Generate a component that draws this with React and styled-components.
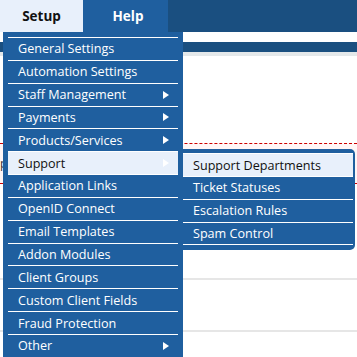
import styled, { createGlobalStyle } from "styled-components"

const Global = createGlobalStyle`
    html, body {
        margin: 0;
        padding: 0;
        background: #fff;
        font-family: "Open Sans", "Liberation Sans", sans-serif;
    }
    * { box-sizing: border-box; }
`;

const Page = styled.div`
    position: relative;
    width: 357px;
    height: 357px;
    overflow: hidden;
    background: #fff;
`;

const TopBar = styled.div`
    display: flex;
    height: 32px;
    background: #1a4f80;
`;

const Tab = styled.div`
    width: ${p => p.$w}px;
    display: flex;
    align-items: center;
    justify-content: center;
    font-size: 13.5px;
    font-weight: 700;
    color: ${p => p.$active ? '#111' : '#fff'};
    background: ${p => p.$active ? '#e8f0fb' : '#1f5f9f'};
    padding-left: ${p => p.$pl || 0}px;
`;

const Band = styled.div`
    margin-top: 10px;
    height: 10px;
    background: #1a4f80;
    border-bottom: 4px solid #e4e8ea;
    box-sizing: content-box;
`;

const Content = styled.div`
    padding-top: 87px;
`;

const NoticeBox = styled.div`
    height: 41px;
    border-top: 1px dashed #c00;
    border-bottom: 1px dashed #c00;
    background: #fff6f6;
    font-size: 12px;
    line-height: 39px;
    color: #333;
`;

const Rule = styled.div`
    height: 2px;
    background: #e6e6e6;
    margin-top: ${p => p.$mt}px;
`;

const Dropdown = styled.div`
    position: absolute;
    top: 32px;
    left: 3px;
    width: 180px;
    padding: 5px 5px 20px;
    background: #1f5f9f;
`;

const Item = styled.div`
    position: relative;
    height: 22.85px;
    border-top: 1px solid #fff;
    border-bottom: ${p => p.$last ? '1px solid #fff' : 'none'};
    padding-left: 10px;
    display: flex;
    align-items: center;
    font-size: 12.6px;
    color: ${p => p.$hl ? '#111' : '#fff'};
    background: ${p => p.$hl ? '#e8f0fb' : 'transparent'};
    white-space: nowrap;
`;

const Arrow = styled.span`
    position: absolute;
    right: 9px;
    top: 50%;
    margin-top: -4px;
    width: 0;
    height: 0;
    border-top: 4px solid transparent;
    border-bottom: 4px solid transparent;
    border-left: 6px solid #fff;
`;

const SubMenu = styled.div`
    position: absolute;
    top: -3px;
    left: 175px;
    width: 172px;
    padding: 4px 2px 5px 0;
    background: #1f5f9f;
    border-radius: 0 5px 5px 0;
`;

const mainItems = [
    { label: 'General Settings' },
    { label: 'Automation Settings' },
    { label: 'Staff Management', sub: true },
    { label: 'Payments', sub: true },
    { label: 'Products/Services', sub: true },
    { label: 'Support', sub: true, open: true },
    { label: 'Application Links' },
    { label: 'OpenID Connect' },
    { label: 'Email Templates' },
    { label: 'Addon Modules' },
    { label: 'Client Groups' },
    { label: 'Custom Client Fields' },
    { label: 'Fraud Protection' },
    { label: 'Other', sub: true },
];

const supportItems = ['Support Departments', 'Ticket Statuses', 'Escalation Rules', 'Spam Control'];

export default function App() {
    return (
        <Page>
            <Global />
            <TopBar>
                <Tab $w={83} $active>Setup</Tab>
                <Tab $w={85} $pl={5}>Help</Tab>
            </TopBar>
            <Band />
            <Content>
                <NoticeBox>p</NoticeBox>
                <Rule $mt={94} />
                <Rule $mt={50} />
            </Content>
            <Dropdown>
                {mainItems.map((it, key) => (
                    <Item key={`main-${key}`} $hl={it.open}>
                        {it.label}
                        {it.sub && <Arrow />}
                        {it.open && (
                            <SubMenu>
                                {supportItems.map((s, i) => (
                                    <Item key={`sub-${i}`} $hl={i === 0} $last={i === supportItems.length - 1}>{s}</Item>
                                ))}
                            </SubMenu>
                        )}
                    </Item>
                ))}
            </Dropdown>
        </Page>
    )
}
